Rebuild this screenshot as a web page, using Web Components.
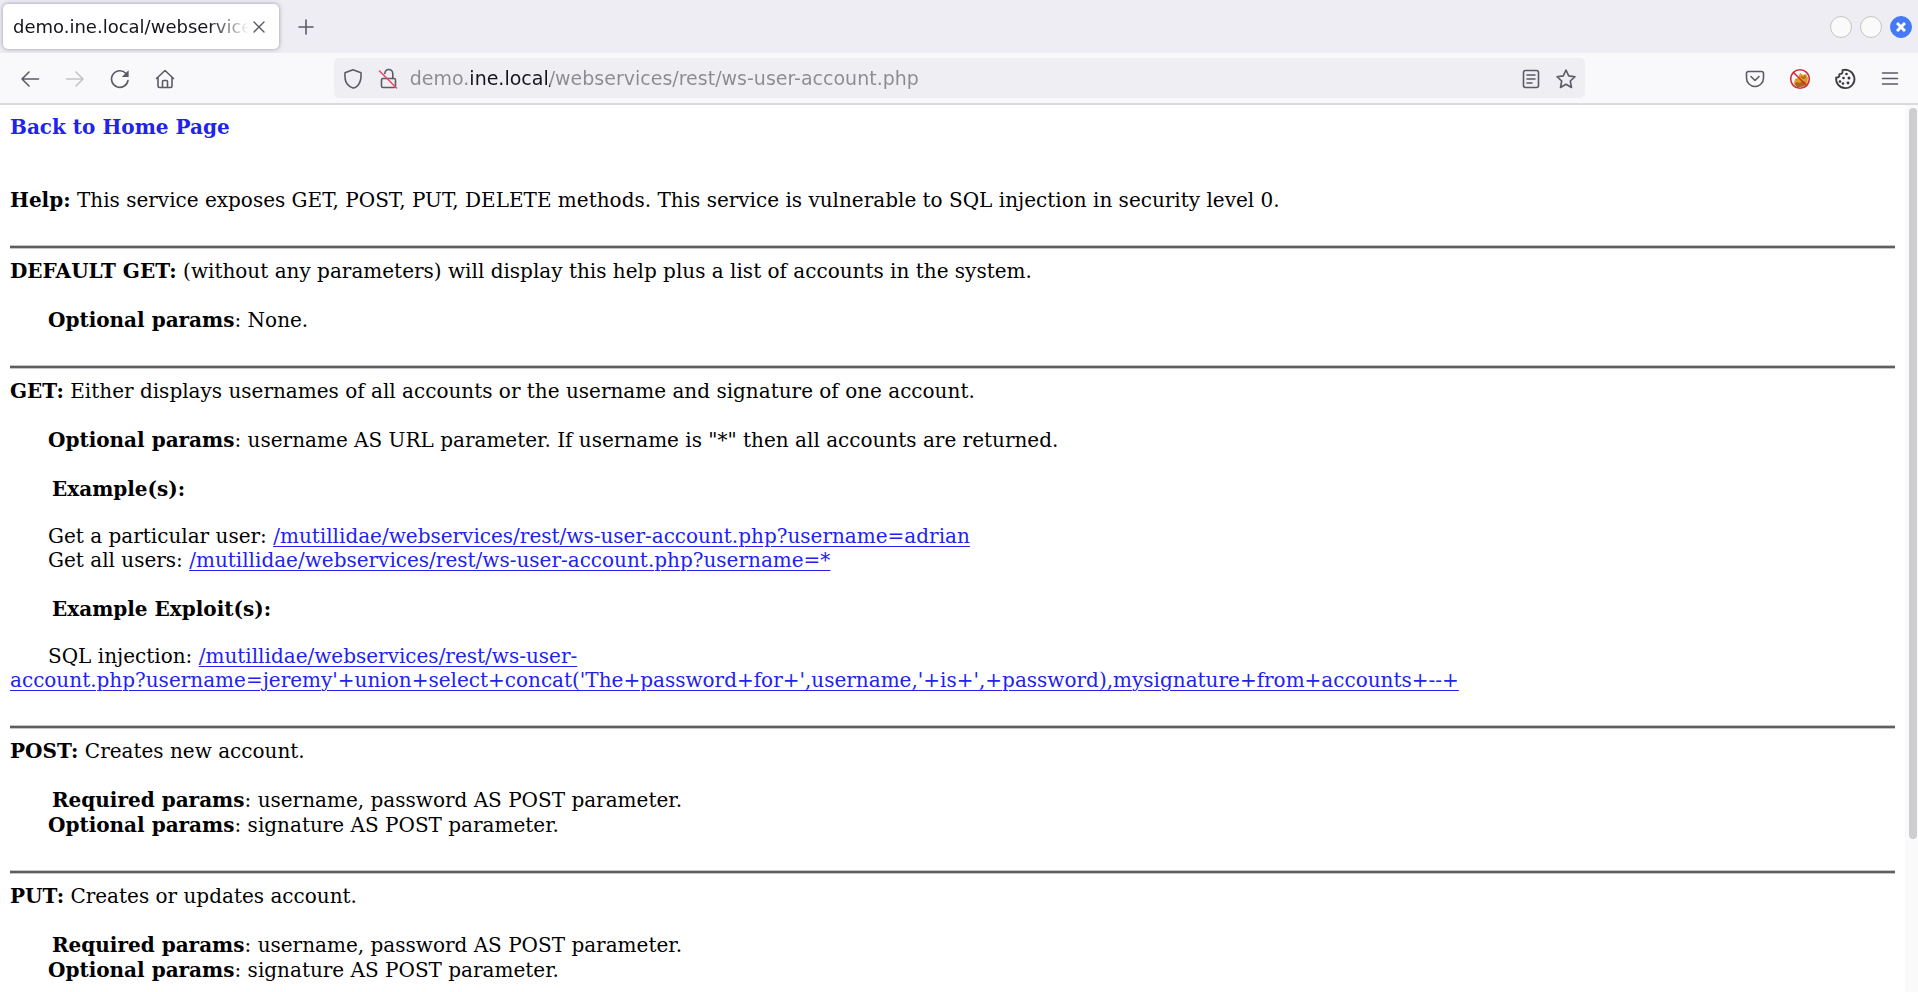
<!DOCTYPE html>
<html lang="en">
<head>
<meta charset="utf-8">
<title>demo.ine.local/webservices/rest/ws-user-account.php</title>
<style>
  html, body { height: 100%; margin: 0; }
  body { background: #fff; overflow: hidden; }
  a { color: #2222ee; text-decoration-thickness: 1px; text-underline-offset: 3px; }
  .home { text-decoration: none; font-weight: bold; }
  .keep { white-space: nowrap; }
</style>
</head>
<body>
<browser-window>
  <tab-strip slot="tabs">
    <browser-tab>demo.ine.local/webservices/rest/ws-user-account.php</browser-tab>
  </tab-strip>
  <nav-bar slot="nav"></nav-bar>

  <doc-line gap="large"><a class="home" href="#home">Back to Home Page</a></doc-line>
  <doc-line><b>Help:</b> This service exposes GET, POST, PUT, DELETE methods. This service is vulnerable to SQL injection in security level 0.</doc-line>

  <method-section>
    <doc-line gap="medium"><b>DEFAULT GET:</b> (without any parameters) will display this help plus a list of accounts in the system.</doc-line>
    <doc-line indent><b>Optional params</b>: None.</doc-line>
  </method-section>

  <method-section>
    <doc-line gap="medium"><b>GET:</b> Either displays usernames of all accounts or the username and signature of one account.</doc-line>
    <doc-line indent gap="medium"><b>Optional params</b>: username AS URL parameter. If username is "*" then all accounts are returned.</doc-line>
    <doc-line indent="deep" gap="small"><b>Example(s):</b></doc-line>
    <doc-line indent>Get a particular user: <a href="#adrian">/mutillidae/webservices/rest/ws-user-account.php?username=adrian</a></doc-line>
    <doc-line indent gap="medium">Get all users: <a href="#all">/mutillidae/webservices/rest/ws-user-account.php?username=*</a></doc-line>
    <doc-line indent="deep" gap="small"><b>Example Exploit(s):</b></doc-line>
    <doc-line indent>SQL injection: <a href="#exploit">/mutillidae/webservices/rest/ws-user-<wbr><span class="keep">account.php?username=jeremy'+union+select+concat('The+password+for+',username,'+is+',+password),mysignature+from+accounts+--+</span></a></doc-line>
  </method-section>

  <method-section>
    <doc-line gap="medium"><b>POST:</b> Creates new account.</doc-line>
    <doc-line indent="deep" gap="hair"><b>Required params</b>: username, password AS POST parameter.</doc-line>
    <doc-line indent><b>Optional params</b>: signature AS POST parameter.</doc-line>
  </method-section>

  <method-section>
    <doc-line gap="medium"><b>PUT:</b> Creates or updates account.</doc-line>
    <doc-line indent="deep" gap="hair"><b>Required params</b>: username, password AS POST parameter.</doc-line>
    <doc-line indent><b>Optional params</b>: signature AS POST parameter.</doc-line>
  </method-section>
</browser-window>

<script>
const define = (name, html) => {
  const template = document.createElement('template');
  template.innerHTML = html;
  customElements.define(name, class extends HTMLElement {
    constructor() {
      super();
      this.attachShadow({ mode: 'open' }).append(template.content.cloneNode(true));
    }
  });
};

const ICONS = {
  back: '<path d="M18.500 10H2M9 3L2 10l7 7"/>',
  forward: '<path d="M1.500 10H18M11 3l7 7-7 7"/>',
  reload: '<path d="M18 11.500A8.300 8.300 0 1 1 15.800 4.300"/><path d="M18.600 1.200V8h-6.800z" fill="currentColor" stroke="none"/>',
  home: '<path d="M1.500 9.500L10 1.500l8.500 8M3 8.500V17q0 1.500 1.500 1.500h11Q17 18.500 17 17V8.500M7.500 18v-5.500q0-1 1-1h3q1 0 1 1V18"/>',
  pocket: '<path d="M3.500 2.500h13q2 0 2 2v4.500a8.500 8.500 0 0 1-17 0V4.500q0-2 2-2zM6 7.500l4 4 4-4"/>',
  nofox: '<g stroke="none"><path fill="#e09a28" d="M4 14l1-4 3-1 2-5 3 2 3-1 2 4-.500 5-4 3.500-6 .500z"/><path fill="#a9691a" d="M4 15l3-2 3 1 2-2 4 1-2 4-6 1.500zM10 7l3 1 2-2 1 3-3 1z"/></g><circle cx="10" cy="10" r="9.300" stroke="#cc2f38"/><path d="M3.500 3.500l13 13" stroke="#cc2f38"/>',
  cookie: '<g stroke="#3c3c42" stroke-width="1.800"><path d="M7.500 1.200A9.200 9.200 0 1 1 1.200 8.500Q3.500 9 4.500 7 3.500 4.800 5.500 4.800 8 5 7.500 1.200z"/></g><g fill="#333338" stroke="none"><circle cx="11.500" cy="5" r="1.300"/><circle cx="8.500" cy="9" r="1.300"/><circle cx="14" cy="9" r="1.500"/><circle cx="5" cy="12.500" r="1.300"/><circle cx="8" cy="14.500" r="1.300"/><circle cx="13" cy="14" r="1.400"/></g>',
  menu: '<path d="M2.500 4h15M2.500 9.500h15M2.500 15h15"/>',
  shield: '<path d="M10 .800l8 3q.500 7-2 11T10 19q-3.500-.800-6-4.200T2 3.800z"/>',
  lock: '<rect x="3.500" y="9.500" width="14" height="9" rx="1.500"/><path d="M6.800 4.500q.500-4 4-4t4 4v5"/><path d="M1.500 2l17 17" stroke="#f0466e"/>',
  reader: '<rect x="2.500" y="1.500" width="15" height="17" rx="2"/><path d="M6 6h8M6 10h8M6 14h5"/>',
  star: '<path d="M10 1l2.700 5.900 6.300.800-4.700 4.300 1.200 6.500L10 15.300l-5.500 3.200L5.700 12 1 7.700l6.300-.800z"/>',
  close: '<path d="M5 5l10 10M15 5L5 15" stroke-width="1.400"/>',
  plus: '<path d="M10 3v14M3 10h14"/>'
};

customElements.define('icon-button', class extends HTMLElement {
  connectedCallback() {
    const root = this.shadowRoot || this.attachShadow({ mode: 'open' });
    root.innerHTML = `<style>
      :host { display: block; flex: none; width: 45px; height: 40px; }
      :host([narrow]) { width: 35px; }
      :host([tight]) { width: 20px; }
      button { display: grid; place-items: center; box-sizing: border-box; width: 100%; height: 100%; margin: 0; padding: var(--icon-drop, 0) 0 0; border: 0; background: none; color: #5b5b66; }
      button:disabled { color: #c4c4c8; }
      svg { display: block; width: 20px; height: 20px; overflow: visible; fill: none; stroke: currentColor; stroke-width: 1.600; stroke-linecap: round; stroke-linejoin: round; }
    </style>
    <button type="button" aria-label="${this.getAttribute('label')}" ${this.hasAttribute('off') ? 'disabled' : ''}>
      <svg viewBox="0 0 20 20" aria-hidden="true">${ICONS[this.getAttribute('icon')]}</svg>
    </button>`;
  }
});

define('browser-tab', `<style>
  :host { display: flex; align-items: center; box-sizing: border-box; width: 276px; height: 45px; padding: 0 10px; border-radius: 5px; background: #fff; box-shadow: 0 0 4px rgba(60, 60, 90, .5); font: 18px/24px "DejaVu Sans", sans-serif; color: #15141a; }
  span { flex: 1; min-width: 0; overflow: hidden; white-space: nowrap; -webkit-mask-image: linear-gradient(to left, transparent, #000 40px); mask-image: linear-gradient(to left, transparent, #000 40px); }
</style><span><slot></slot></span><icon-button tight icon="close" label="Close tab"></icon-button>`);

define('window-controls', `<style>
  :host { display: flex; gap: 8px; }
  button { box-sizing: border-box; display: grid; place-items: center; width: 22px; height: 22px; padding: 0; border: 1px solid #c4c4c2; border-radius: 50%; background: #fafafa; }
  .close { border-color: #447af6; background: #447af6; }
  svg { width: 10px; height: 10px; stroke: #fff; stroke-width: 3; }
</style>
<button type="button" aria-label="Minimize"></button>
<button type="button" aria-label="Maximize"></button>
<button type="button" class="close" aria-label="Close"><svg viewBox="0 0 10 10"><path d="M1 1l8 8M9 1L1 9"/></svg></button>`);

define('tab-strip', `<style>
  :host { display: flex; align-items: center; justify-content: space-between; height: 53px; padding: 0 6px 0 3px; background: #eeedf3; }
  div { display: flex; align-items: center; gap: 4px; }
</style><div><slot></slot><icon-button icon="plus" label="New tab"></icon-button></div><window-controls></window-controls>`);

define('address-bar', `<style>
  :host { display: flex; align-items: center; box-sizing: border-box; height: 40px; padding: 0 2px; border-radius: 5px; background: #efeef3; }
  input { flex: 1; min-width: 0; height: 30px; margin: 0 0 0 4px; padding: 0; border: 0; outline: 0; font: 19px/30px "DejaVu Sans", sans-serif; color: transparent; background: linear-gradient(to right, #8b8b90 60px, #15141a 60px, #15141a 140px, #8b8b90 140px); -webkit-background-clip: text; background-clip: text; }
</style>
<icon-button narrow icon="shield" label="Tracking protection"></icon-button>
<icon-button narrow icon="lock" label="Connection not secure"></icon-button>
<input type="text" aria-label="Address" value="demo.ine.local/webservices/rest/ws-user-account.php">
<icon-button narrow icon="reader" label="Reader view"></icon-button>
<icon-button narrow icon="star" label="Bookmark this page"></icon-button>`);

define('nav-bar', `<style>
  :host { display: flex; align-items: center; height: 50px; padding: 0 6px 0 7px; border-bottom: 2px solid #dadade; background: #f9f9fb; --icon-drop: 2px; }
  i { flex: 2; }
  address-bar { flex: 17; }
</style>
<icon-button icon="back" label="Back"></icon-button>
<icon-button icon="forward" label="Forward" off></icon-button>
<icon-button icon="reload" label="Reload"></icon-button>
<icon-button icon="home" label="Home"></icon-button>
<i></i><address-bar></address-bar><i></i>
<icon-button icon="pocket" label="Save to Pocket"></icon-button>
<icon-button icon="nofox" label="FoxyProxy disabled"></icon-button>
<icon-button icon="cookie" label="Cookie editor"></icon-button>
<icon-button icon="menu" label="Application menu"></icon-button>`);

define('scroll-bar', `<style>
  :host { display: block; flex: none; box-sizing: border-box; width: 13px; padding: 3px 1px 3px 4px; background: #fafafa; }
  div { height: 83%; border-radius: 4px; background: #cdcdd2; }
</style><div></div>`);

define('doc-line', `<style>
  :host { display: block; line-height: 24px; }
  :host([indent]) { text-indent: 38px; }
  :host([indent="deep"]) { text-indent: 42px; }
  :host([gap="hair"]) { margin-bottom: 1px; }
  :host([gap="small"]) { margin-bottom: 23px; }
  :host([gap="medium"]) { margin-bottom: 25px; }
  :host([gap="large"]) { margin-bottom: 49px; }
</style><slot></slot>`);

define('method-section', `<style>
  :host { display: block; }
  hr { height: 2px; margin: 33px 0 10px; border: solid #c4c6c4; border-width: 1px 0; background: #5c5f5c; }
</style><hr><slot></slot>`);

define('browser-window', `<style>
  :host { display: flex; flex-direction: column; height: 100%; }
  .view { display: flex; flex: 1; min-height: 0; }
  main { flex: 1; min-width: 0; overflow: hidden; padding: 10px; font: 20px/24px "DejaVu Serif", serif; color: #000; }
</style>
<slot name="tabs"></slot><slot name="nav"></slot>
<div class="view"><main><slot></slot></main><scroll-bar></scroll-bar></div>`);
</script>
</body>
</html>
